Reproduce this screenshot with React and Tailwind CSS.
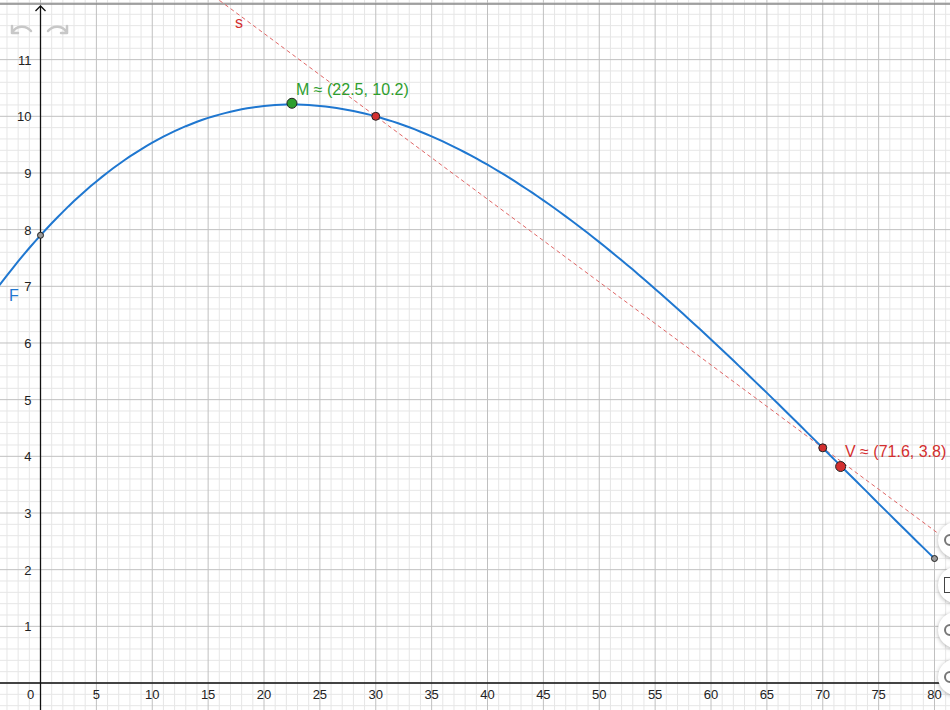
import React from "react"

const X0 = 40.5, SX = 11.175, Y0 = 683, SY = 56.67
const px = (x) => X0 + x * SX
const py = (y) => Y0 - y * SY
const f = (x) => 2.642e-5 * x ** 3 - 0.005731 * x ** 2 + 0.2181 * x + 7.9
const tan = (x) => 10 - 0.14625 * (x - 30)

export default function App() {
  const minorX = [], majorX = [], minorY = [], majorY = []
  for (let i = -4; i <= 82; i++) (i % 5 === 0 ? majorX : minorX).push(i)
  for (let j = -5; j <= 60; j++) (j % 5 === 0 ? majorY : minorY).push(j / 5)
  let curve = ""
  for (let x = -4; x <= 80.01; x += 0.5) curve += `${curve ? "L" : "M"}${px(x).toFixed(1)},${py(f(x)).toFixed(1)}`
  const font = { fontFamily: "'Liberation Sans', Arial, sans-serif" }

  return (
    <div className="relative w-[950px] h-[710px] overflow-hidden bg-white" style={font}>
      <svg width="950" height="710" className="absolute inset-0">
        {minorX.map((i) => <line key={"mx" + i} x1={px(i)} x2={px(i)} y1="0" y2="710" stroke="#e6e6e6" strokeWidth="1" />)}
        {minorY.map((j) => <line key={"my" + j} y1={py(j)} y2={py(j)} x1="0" x2="950" stroke="#e6e6e6" strokeWidth="1" />)}
        {majorX.map((i) => <line key={"Mx" + i} x1={px(i)} x2={px(i)} y1="0" y2="710" stroke="#c0c0c0" strokeWidth="1" />)}
        {majorY.map((j) => <line key={"My" + j} y1={py(j)} y2={py(j)} x1="0" x2="950" stroke="#c0c0c0" strokeWidth="1" />)}
        <line x1="0" x2="950" y1="4" y2="4" stroke="#8a8a8a" strokeWidth="1.5" />
        <line x1={X0} x2={X0} y1="6" y2="710" stroke="#111" strokeWidth="1.3" />
        <line x1="0" x2="950" y1={Y0} y2={Y0} stroke="#111" strokeWidth="1.3" />
        <path d={`M${X0 - 5},11 L${X0},6 L${X0 + 5},11`} fill="none" stroke="#111" strokeWidth="1.3" />
        {[0, 5, 10, 15, 20, 25, 30, 35, 40, 45, 50, 55, 60, 65, 70, 75, 80].map((i) => (
          <text key={"lx" + i} x={i === 0 ? px(i) - 10 : px(i)} y="699" fontSize="13" textAnchor="middle" fill="#222">{i}</text>
        ))}
        {[1, 2, 3, 4, 5, 6, 7, 8, 9, 10, 11].map((j) => (
          <text key={"ly" + j} x={X0 - 9} y={py(j) + 5} fontSize="13" textAnchor="end" fill="#222">{j}</text>
        ))}
        <line x1={px(15)} y1={py(tan(15))} x2={px(84)} y2={py(tan(84))} stroke="#e06666" strokeWidth="1" strokeDasharray="4 3" />
        <path d={curve} fill="none" stroke="#1f77d0" strokeWidth="2" />
        <circle cx={px(0)} cy={py(7.9)} r="3" fill="#999" stroke="#222" strokeWidth="1" />
        <circle cx={px(80)} cy={py(f(80))} r="3" fill="#999" stroke="#222" strokeWidth="1" />
        <circle cx={px(30)} cy={py(10)} r="4" fill="#d32f2f" stroke="#222" strokeWidth="1" />
        <circle cx={px(70)} cy={py(tan(70))} r="4" fill="#d32f2f" stroke="#222" strokeWidth="1" />
        <circle cx={px(22.5)} cy={py(10.23)} r="5" fill="#2e9e2e" stroke="#222" strokeWidth="1" />
        <circle cx={px(71.6)} cy={py(3.82)} r="5" fill="#d32f2f" stroke="#222" strokeWidth="1" />
        <text x="296" y="95" fontSize="16" fill="#2e9e2e">M ≈ (22.5, 10.2)</text>
        <text x="845" y="457" fontSize="16" fill="#d32f2f">V ≈ (71.6, 3.8)</text>
        <text x="235" y="28" fontSize="16" fill="#d32f2f">s</text>
        <text x="9" y="301" fontSize="16" fill="#1f77d0">F</text>
        <path d="M12,33 C16,25 26,25 31,31 M12,33 L12,26 M12,33 L18,33" fill="none" stroke="#c8c8c8" strokeWidth="2.5" strokeLinecap="round" />
        <path d="M67,33 C63,25 53,25 48,31 M67,33 L67,26 M67,33 L61,33" fill="none" stroke="#c8c8c8" strokeWidth="2.5" strokeLinecap="round" />
      </svg>
      {[540, 585, 630, 677].map((t, i) => (
        <div key={t} className="absolute left-[938px] w-9 h-9 rounded-full bg-white shadow-[0_1px_4px_rgba(0,0,0,0.3)] flex items-center pl-1.5" style={{ top: t - 18 }}>
          {i === 1 ? <span className="w-3 h-4 border border-[#444] bg-white" /> : <span className="w-3 h-3 rounded-full border-2 border-[#777]" />}
        </div>
      ))}
    </div>
  )
}
